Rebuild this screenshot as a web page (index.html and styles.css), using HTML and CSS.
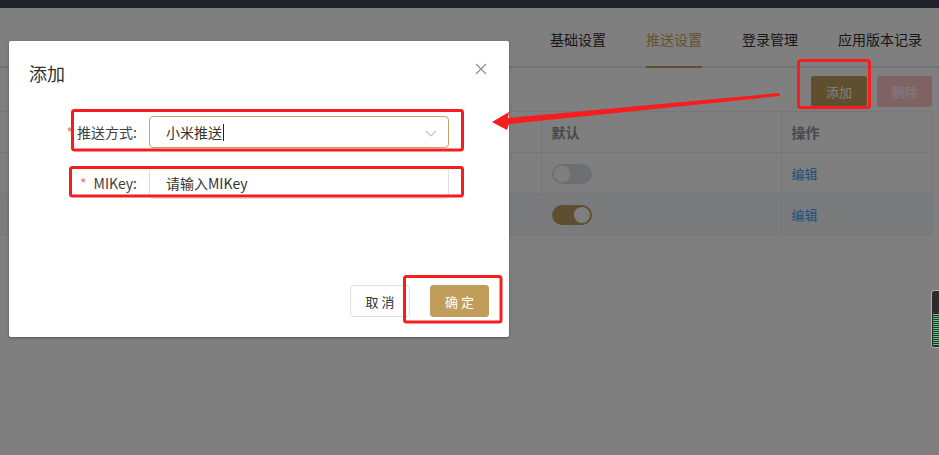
FILE: index.html
```html
<!DOCTYPE html>
<html lang="zh-CN">
<head>
<meta charset="utf-8">
<title>推送设置</title>
<link rel="stylesheet" href="styles.css">
</head>
<body>
<div class="app">
  <div class="topbar"></div>
  <div class="tabs">
    <div class="tab">基础设置</div>
    <div class="tab active">推送设置</div>
    <div class="tab">登录管理</div>
    <div class="tab last">应用版本记录</div>
  </div>
  <div class="toolbar">
    <button class="btn btn-gold">添加</button>
    <button class="btn btn-danger-dis">删除</button>
  </div>
  <table class="grid">
    <colgroup><col class="c1"><col class="c2"><col class="c3"></colgroup>
    <thead>
      <tr><th></th><th>默认</th><th>操作</th></tr>
    </thead>
    <tbody>
      <tr><td></td><td><span class="switch"></span></td><td><a class="link">编辑</a></td></tr>
      <tr class="hover"><td></td><td><span class="switch on"></span></td><td><a class="link">编辑</a></td></tr>
    </tbody>
  </table>
</div>

<div class="mask"></div>

<div class="dialog">
  <div class="dlg-header">
    <span class="dlg-title">添加</span>
    <span class="dlg-close"><svg width="16" height="16" viewBox="0 0 16 16"><path d="M3 3 L13 13 M13 3 L3 13" stroke="#909399" stroke-width="1.3" fill="none"/></svg></span>
  </div>
  <div class="dlg-body">
    <div class="form-item">
      <label class="form-label"><span class="req">*</span>推送方式:</label>
      <div class="field select focus">
        <span class="val">小米推送</span><span class="caret"></span>
        <svg class="chev" width="14" height="14" viewBox="0 0 14 14"><path d="M2 5 L7 10 L12 5" stroke="#c0c4cc" stroke-width="1.2" fill="none"/></svg>
      </div>
    </div>
    <div class="form-item">
      <label class="form-label"><span class="req">*</span> MIKey:</label>
      <div class="field">
        <span class="val">请输入MIKey</span>
      </div>
    </div>
  </div>
  <div class="dlg-footer">
    <button class="btn-plain">取 消</button>
    <button class="btn-primary">确 定</button>
  </div>
</div>

<svg class="annot" width="939" height="455" viewBox="0 0 939 455">
  <g fill="none" stroke="#f51d1d" stroke-width="3">
    <rect x="72.5" y="110.5" width="390" height="39.5" rx="2"/>
    <rect x="70.5" y="167.5" width="392" height="28.5" rx="2"/>
    <rect x="798.5" y="60.5" width="71" height="47" rx="2"/>
    <rect x="404.5" y="276.5" width="96.5" height="45.5" rx="2"/>
  </g>
  <polygon fill="#f51d1d" points="779,93 780,96 509,124 507,130 492,122 509,112 508,118"/>
</svg>

<div class="widget"></div>
</body>
</html>
```

FILE: styles.css
```css
* { box-sizing: border-box; }
html, body {
  margin: 0;
  padding: 0;
  width: 939px;
  height: 455px;
  overflow: hidden;
  background: #fff;
  font-family: "Noto Sans CJK SC", "Noto Sans", sans-serif;
  font-size: 14px;
  color: #303133;
}
.app { position: relative; width: 939px; height: 455px; }
.topbar { height: 8px; background: #3e4456; }

.tabs {
  display: flex;
  justify-content: flex-end;
  height: 60px;
  padding-right: 17px;
  border-bottom: 2px solid #e4e7ed;
}
.tab {
  margin: 0 20px;
  padding-top: 21px;
  height: 60px;
  margin-bottom: -2px;
  line-height: 20px;
  font-size: 14px;
  color: #303133;
  border-bottom: 2px solid transparent;
}
.tab.last { margin-right: 0; }
.tab.active { color: #c6a466; border-bottom-color: #c09e60; }

.toolbar {
  display: flex;
  justify-content: flex-end;
  gap: 10px;
  padding: 8px 7px 0 0;
}
.btn {
  width: 56px;
  height: 31px;
  border: none;
  border-radius: 3px;
  color: #fff;
  font-family: inherit;
  font-size: 13px;
  padding: 0;
}
.btn-gold { background: #c09e5f; }
.btn-danger-dis { background: #ffc4c4; width: 55px; }

.grid {
  margin-top: 4px;
  width: 932px;
  border-collapse: collapse;
  table-layout: fixed;
  border-top: 1px solid #ebeef5;
  border-right: 1px solid #ebeef5;
}
.grid .c1 { width: 541px; }
.grid .c2 { width: 240px; }
.grid .c3 { width: 151px; }
.grid th, .grid td {
  height: 41px;
  padding: 0 10px;
  text-align: left;
  border-bottom: 1px solid #ebeef5;
  border-left: 1px solid #ebeef5;
  font-weight: 700;
}
.grid th { color: #909399; font-size: 14px; }
.grid td { font-weight: 400; }
.grid td:first-child, .grid th:first-child { border-left: none; }
.grid tr.hover td { background: #f5f7fa; }
.grid tr.hover td:nth-child(2) { border-left-color: #f5f7fa; }

.switch {
  display: inline-block;
  position: relative;
  width: 40px;
  height: 20px;
  border-radius: 10px;
  background: #dcdfe6;
  vertical-align: middle;
}
.switch::after {
  content: "";
  position: absolute;
  top: 2px;
  left: 2px;
  width: 16px;
  height: 16px;
  border-radius: 50%;
  background: #fff;
}
.switch.on { background: #bf9d5e; }
.switch.on::after { left: 22px; }
.link { color: #409eff; font-size: 13px; }

.mask {
  position: absolute;
  inset: 0;
  background: rgba(0, 0, 0, 0.5);
}

.dialog {
  position: absolute;
  left: 9px;
  top: 41px;
  width: 500px;
  height: 296px;
  background: #fff;
  border-radius: 2px;
  box-shadow: 0 1px 3px rgba(0, 0, 0, 0.3);
  display: flex;
  flex-direction: column;
}
.dlg-header {
  position: relative;
  padding: 20px 20px 10px;
}
.dlg-title {
  display: block;
  font-size: 18px;
  line-height: 24px;
  color: #303133;
}
.dlg-close {
  position: absolute;
  top: 20px;
  right: 20px;
  width: 16px;
  height: 16px;
}
.dlg-close svg { display: block; }
.dlg-body {
  flex: 1;
  padding: 21px 0 0 40px;
}
.form-item {
  display: flex;
  align-items: center;
  height: 32px;
  margin-bottom: 19px;
}
.form-label {
  width: 100px;
  padding-right: 12px;
  text-align: right;
  font-size: 14px;
  color: #404040;
}
.req { color: #f56c6c; margin-right: 4px; }
.field {
  position: relative;
  display: flex;
  align-items: center;
  width: 300px;
  height: 32px;
  padding-left: 16px;
  border: 1px solid #dcdfe6;
  border-radius: 4px;
  font-size: 14px;
  color: #333;
}
.field.focus { border-color: #c4a36a; }
.caret {
  display: inline-block;
  width: 1px;
  height: 17px;
  background: #222;
  margin-left: 1px;
}
.chev {
  position: absolute;
  right: 10px;
  top: 9px;
}
.dlg-footer {
  display: flex;
  justify-content: flex-end;
  gap: 20px;
  padding: 10px 20px 20px;
}
.btn-plain, .btn-primary {
  width: 60px;
  height: 32px;
  border-radius: 3px;
  font-family: inherit;
  font-size: 13px;
  padding: 0;
}
.btn-plain { background: #fff; border: 1px solid #dcdfe6; color: #303133; }
.btn-primary { background: #c09d5b; border: 1px solid #c09d5b; color: #fff; width: 59px; }

.annot {
  position: absolute;
  left: 0;
  top: 0;
  pointer-events: none;
}

.widget {
  position: absolute;
  left: 931px;
  top: 290px;
  width: 12px;
  height: 58px;
  border: 1px solid #b0b0b0;
  border-radius: 3px;
  background:
    repeating-linear-gradient(to bottom, #4fd07f 0 1px, #2c2c2c 1px 2px) 1px 23px / 9px 31px no-repeat,
    #2c2c2c;
}
```
